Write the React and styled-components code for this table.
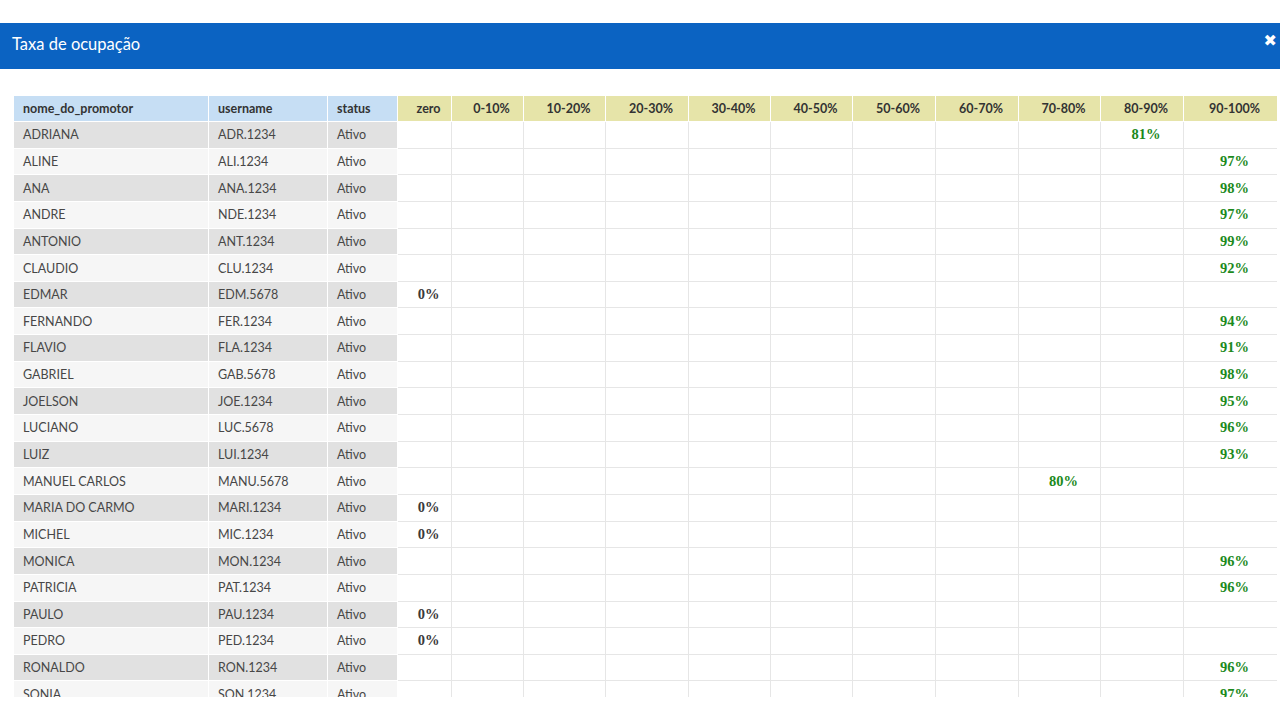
import styled, { createGlobalStyle } from "styled-components";

const GlobalStyle = createGlobalStyle`
  body {
    margin: 0;
    background: #fff;
    font-family: Lato, "Open Sans", sans-serif;
  }
`;

const Page = styled.div`
  width: 1280px;
  height: 720px;
  padding-top: 23px;
  box-sizing: border-box;
  overflow: hidden;
`;

const Header = styled.div`
  height: 46px;
  background: #0b63c2;
  display: flex;
  align-items: center;
  justify-content: space-between;
  padding: 0 3px 4px 12px;
  box-sizing: border-box;
`;

const Title = styled.div`
  color: #fff;
  font-size: 16.5px;
  font-family: Lato, sans-serif;
`;

const Close = styled.button`
  border: none;
  background: none;
  color: #fff;
  font-size: 16px;
  font-weight: 900;
  font-family: "DejaVu Sans", sans-serif;
  padding: 0;
  margin-top: -6px;
  cursor: pointer;
  line-height: 1;
`;

const Scroll = styled.div`
  margin: 26px 3px 0 13px;
  height: 602px;
  overflow: hidden;
`;

const Table = styled.table`
  width: 1264px;
  border-collapse: collapse;
  table-layout: fixed;
  font-size: 12.5px;
`;

const Th = styled.th`
  height: 25px;
  padding: ${(p) => (p.$range ? "0 0 0 8px" : "0 9px")};
  font-weight: 700;
  color: #333;
  text-align: ${(p) => (p.$range ? "center" : "left")};
  background: ${(p) => (p.$range ? "#e6e4a9" : "#c6def4")};
  border: 1px solid #fff;
`;

const Row = styled.tr`
  height: 26.65px;
`;

const InfoCell = styled.td`
  padding: 0 9px;
  color: #474747;
  background: ${(p) => (p.$odd ? "#e1e1e1" : "#f6f6f6")};
  border: 1px solid #fff;
  white-space: nowrap;
`;

const RateCell = styled.td`
  padding: 0 0 0 8px;
  text-align: center;
  background: #fff;
  border: 1px solid #e6e6e6;
  font-family: "Liberation Serif", serif;
  font-weight: 700;
  font-size: 14.5px;
  color: ${(p) => (p.$zero ? "#3a3a3a" : "#1c8a1c")};
`;

const widths = [195, 119, 70, 54, 72, 82, 83, 82, 82, 83, 83, 82, 83, 94];
const ranges = [
  "zero",
  "0-10%",
  "10-20%",
  "20-30%",
  "30-40%",
  "40-50%",
  "50-60%",
  "60-70%",
  "70-80%",
  "80-90%",
  "90-100%",
];

const rows = [
  ["ADRIANA", "ADR.1234", 81],
  ["ALINE", "ALI.1234", 97],
  ["ANA", "ANA.1234", 98],
  ["ANDRE", "NDE.1234", 97],
  ["ANTONIO", "ANT.1234", 99],
  ["CLAUDIO", "CLU.1234", 92],
  ["EDMAR", "EDM.5678", 0],
  ["FERNANDO", "FER.1234", 94],
  ["FLAVIO", "FLA.1234", 91],
  ["GABRIEL", "GAB.5678", 98],
  ["JOELSON", "JOE.1234", 95],
  ["LUCIANO", "LUC.5678", 96],
  ["LUIZ", "LUI.1234", 93],
  ["MANUEL CARLOS", "MANU.5678", 80, 8],
  ["MARIA DO CARMO", "MARI.1234", 0],
  ["MICHEL", "MIC.1234", 0],
  ["MONICA", "MON.1234", 96],
  ["PATRICIA", "PAT.1234", 96],
  ["PAULO", "PAU.1234", 0],
  ["PEDRO", "PED.1234", 0],
  ["RONALDO", "RON.1234", 96],
  ["SONIA", "SON.1234", 97],
];

function bucketOf(value, forced) {
  if (forced !== undefined) return forced;
  if (value === 0) return 0;
  return Math.min(10, Math.floor(value / 10) + 1);
}

export default function App() {
  return (
    <Page>
      <GlobalStyle />
      <Header>
        <Title>Taxa de ocupação</Title>
        <Close>✖</Close>
      </Header>
      <Scroll>
        <Table>
          <colgroup>
            {widths.map((w, i) => (
              <col key={i} style={{ width: w }} />
            ))}
          </colgroup>
          <thead>
            <tr>
              <Th>nome_do_promotor</Th>
              <Th>username</Th>
              <Th>status</Th>
              {ranges.map((r) => (
                <Th key={r} $range>
                  {r}
                </Th>
              ))}
            </tr>
          </thead>
          <tbody>
            {rows.map(([name, user, value, forced], i) => {
              const bucket = bucketOf(value, forced);
              return (
                <Row key={user}>
                  <InfoCell $odd={i % 2 === 0}>{name}</InfoCell>
                  <InfoCell $odd={i % 2 === 0}>{user}</InfoCell>
                  <InfoCell $odd={i % 2 === 0}>Ativo</InfoCell>
                  {ranges.map((r, j) => (
                    <RateCell key={r} $zero={value === 0}>
                      {j === bucket ? `${value}%` : ""}
                    </RateCell>
                  ))}
                </Row>
              );
            })}
          </tbody>
        </Table>
      </Scroll>
    </Page>
  );
}
